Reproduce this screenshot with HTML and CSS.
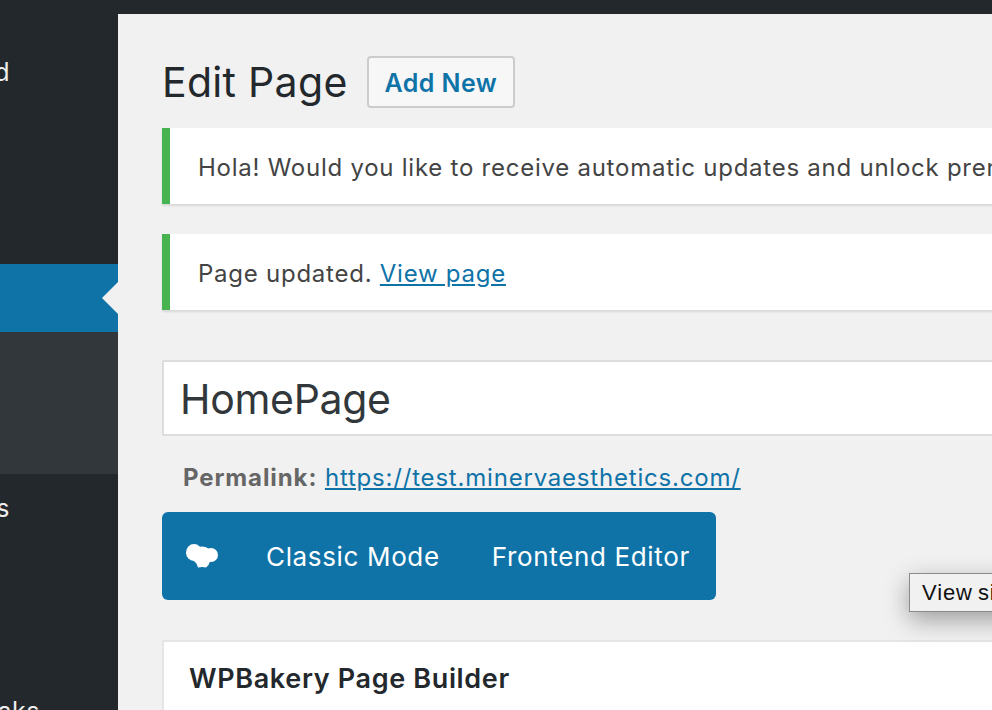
FILE: index.html
```html
<!DOCTYPE html>
<html lang="en">
<head>
<meta charset="utf-8">
<title>Edit Page</title>
<link rel="stylesheet" href="styles.css">
</head>
<body>
<div class="topbar"></div>
<div class="layout">
  <nav class="sidebar">
    <div class="menu-item menu-dashboard"><span class="menu-label">Dashboard</span></div>
    <div class="menu-item menu-current"></div>
    <div class="submenu"></div>
    <div class="menu-item menu-comments"><span class="menu-label">Comments</span></div>
    <div class="menu-item menu-tweaks"><span class="menu-label wide">Tweaks</span></div>
  </nav>
  <main class="content">
    <div class="heading">
      <h1 class="title">Edit Page</h1>
      <a class="add-new">Add New</a>
    </div>
    <div class="notice first-notice"><p>Hola! Would you like to receive automatic updates and unlock premium support?</p></div>
    <div class="notice second-notice"><p>Page updated. <a class="link">View page</a></p></div>
    <div class="title-field">HomePage</div>
    <div class="permalink"><strong>Permalink:</strong> <a class="link">https://test.minervaesthetics.com/</a></div>
    <div class="composer">
      <svg class="logo" viewBox="0 0 32 24" aria-hidden="true">
        <g fill="#fff">
          <ellipse cx="8" cy="8.500" rx="8" ry="8.500"/>
          <circle cx="25" cy="11" r="7"/>
          <ellipse cx="16" cy="9.500" rx="9" ry="7"/>
          <path d="M6 15L25 15L22.500 21L20 23.500L16 23L12 23.500L10.500 19.500Z"/>
        </g>
      </svg>
      <span class="mode classic">Classic Mode</span>
      <span class="mode">Frontend Editor</span>
    </div>
    <section class="panel"><h2>WPBakery Page Builder</h2></section>
    <div class="tooltip">View site</div>
  </main>
</div>
</body>
</html>
```
FILE: styles.css
```css
* { box-sizing: border-box; }
html, body { margin: 0; height: 100%; overflow: hidden; }
body { font-family: Inter, "Liberation Sans", sans-serif; background: #f1f1f1; color: #23282d; }
.topbar { height: 14px; background: #23282d; }
.layout { display: flex; height: 696px; }
.sidebar { width: 118px; flex: none; background: #23282d; color: #eee; display: flex; flex-direction: column; overflow: hidden; }
.menu-item { display: flex; flex: none; font-size: 25px; line-height: 30px; }
.menu-label { width: 10px; display: flex; justify-content: flex-end; white-space: nowrap; letter-spacing: .5px; }
.menu-label.wide { width: 40px; }
.menu-dashboard { height: 250px; padding-top: 43px; }
.menu-current { height: 68px; background: #0f73a8; position: relative; }
.menu-current::after { content: ""; position: absolute; right: 0; top: 18px; border: 16px solid transparent; border-left: 0; border-right-color: #f1f1f1; }
.submenu { height: 142px; flex: none; background: #32373c; }
.menu-comments { height: 222px; padding-top: 19px; }
.content { flex: 1; min-width: 0; padding-left: 44px; position: relative; }
.heading { display: flex; align-items: center; gap: 19px; margin-top: 42px; height: 52px; }
.title { margin: 0; font-size: 41px; font-weight: 400; line-height: 52px; letter-spacing: .3px; white-space: nowrap; }
.add-new { display: block; border: 2px solid #ccc; border-radius: 4px; background: #f7f7f7; color: #0f73a8; font-size: 25px; font-weight: 600; line-height: 50px; height: 52px; padding: 0 16px; letter-spacing: .4px; white-space: nowrap; }
.notice { background: #fff; border-left: 8px solid #46b450; box-shadow: 0 2px 2px rgba(0,0,0,.1); height: 76px; display: flex; align-items: center; padding: 2px 0 0 28px; white-space: nowrap; color: #444; font-size: 24px; letter-spacing: .75px; width: 900px; }
.notice p { margin: 0; }
.first-notice { margin-top: 20px; }
.second-notice { margin-top: 30px; }
.link { color: #0f73a8; text-decoration: underline; }
.title-field { margin-top: 50px; width: 900px; height: 76px; background: #fff; border: 2px solid #ddd; padding-left: 16px; font-size: 41px; line-height: 74px; letter-spacing: -.3px; color: #32373c; }
.permalink { margin-top: 24px; padding-left: 21px; font-size: 24px; line-height: 36px; letter-spacing: .8px; color: #666; white-space: nowrap; }
.permalink strong { letter-spacing: .9px; }
.composer { margin-top: 16px; width: 554px; height: 88px; padding-left: 24px; background: #0f73a8; border-radius: 6px; display: flex; align-items: center; color: #fff; font-size: 26px; letter-spacing: .65px; }
.logo { width: 32px; height: 24px; flex: none; }
.mode { white-space: nowrap; }
.classic { margin: 0 52px 0 48px; }
.panel { margin-top: 40px; width: 900px; height: 100px; background: #fff; border: 2px solid #e5e5e5; padding: 19px 25px; }
.panel h2 { margin: 0; font-size: 27px; font-weight: 600; line-height: 36px; letter-spacing: .65px; white-space: nowrap; }
.tooltip { position: absolute; left: 791px; top: 559px; width: 120px; height: 39px; background: #f1f1f1; border: 1px solid #8a8a8a; box-shadow: 0 8px 24px rgba(0,0,0,.35); color: #111; font-family: "Liberation Sans", sans-serif; font-size: 22px; line-height: 37px; letter-spacing: .9px; word-spacing: -2px; padding-left: 12px; white-space: nowrap; }
```
